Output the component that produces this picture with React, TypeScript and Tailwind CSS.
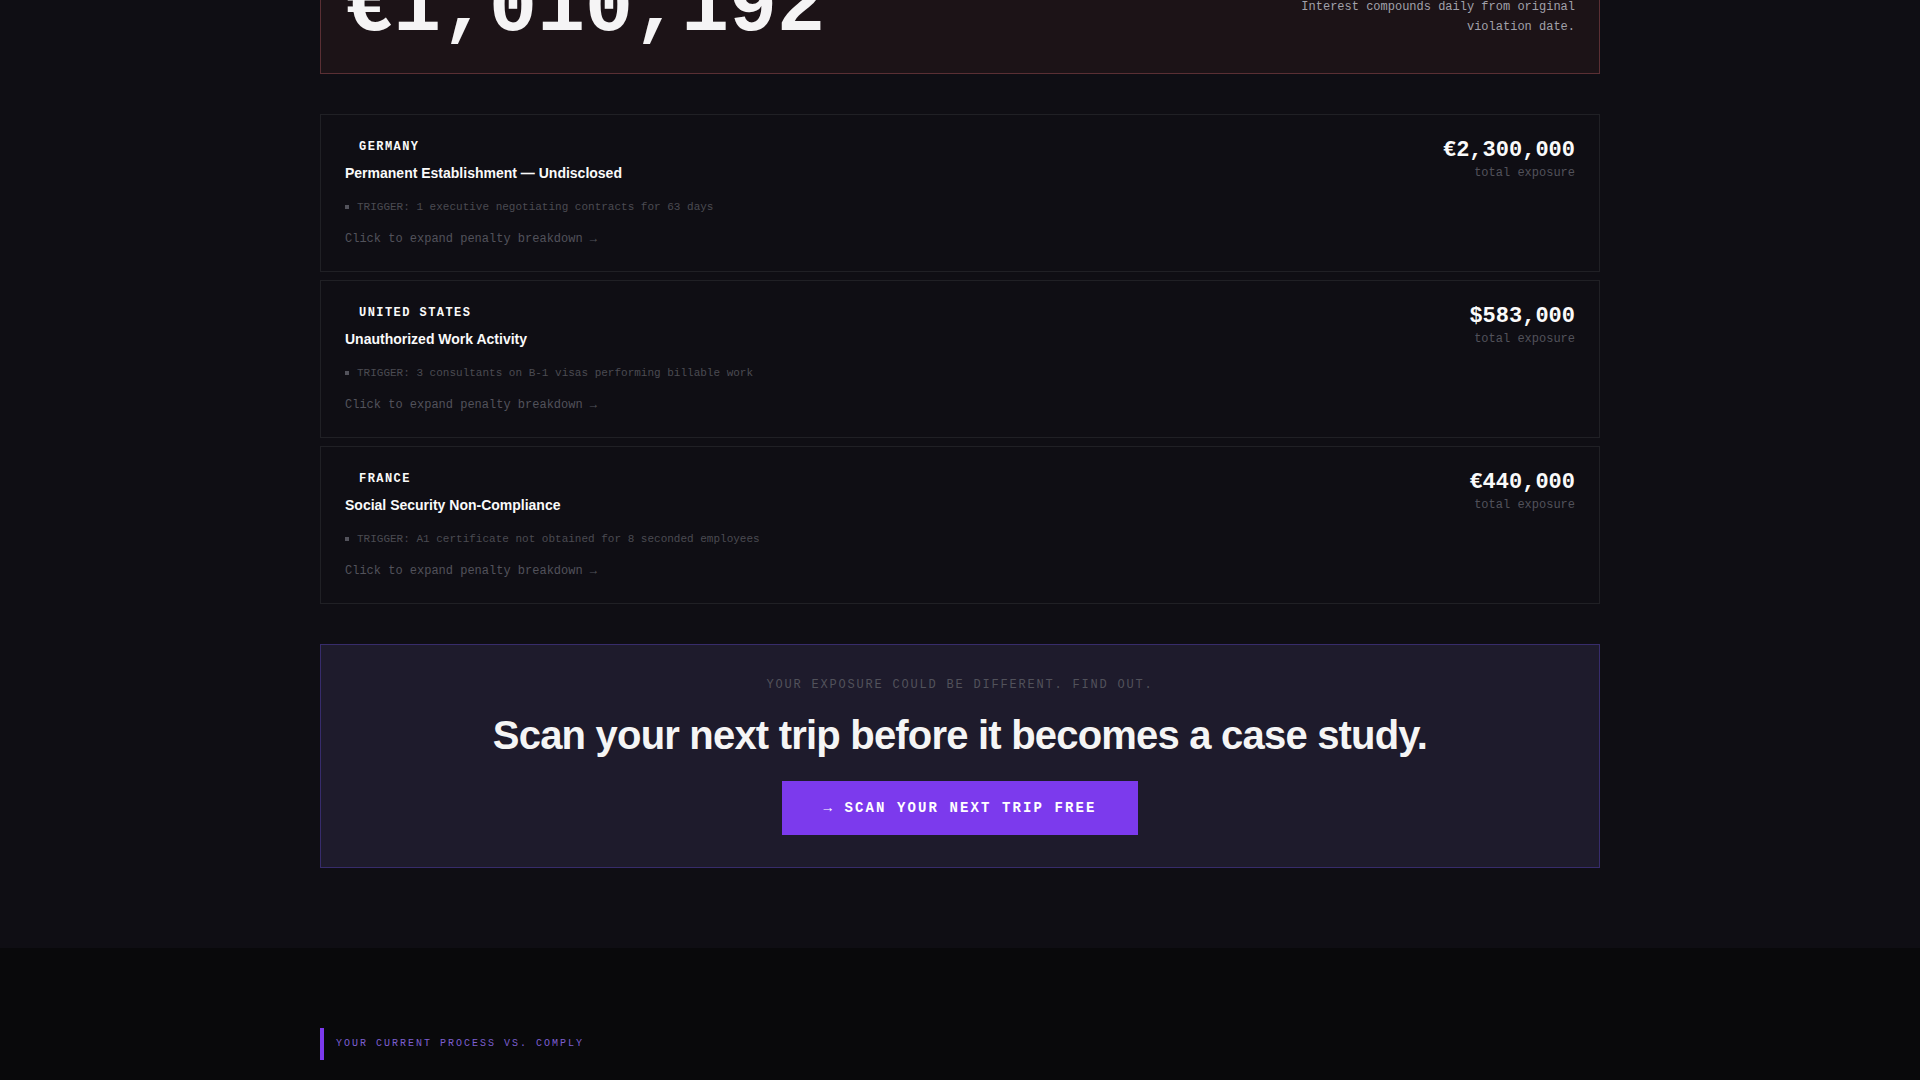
interface Violation {
  id: string;
  country: string;
  title: string;
  trigger: string;
  amount: string;
}

const violations: Violation[] = [
  {
    id: "de",
    country: "Germany",
    title: "Permanent Establishment — Undisclosed",
    trigger: "1 executive negotiating contracts for 63 days",
    amount: "€2,300,000",
  },
  {
    id: "us",
    country: "United States",
    title: "Unauthorized Work Activity",
    trigger: "3 consultants on B-1 visas performing billable work",
    amount: "$583,000",
  },
  {
    id: "fr",
    country: "France",
    title: "Social Security Non-Compliance",
    trigger: "A1 certificate not obtained for 8 seconded employees",
    amount: "€440,000",
  },
];

const mono = "font-['Liberation_Mono',monospace]";

function ExposureTotal() {
  return (
    <div className="-mt-14 flex items-end justify-between border border-[#5a2f34] bg-[#1c1317] p-6">
      <div className={`${mono} text-[80px] leading-none font-bold text-[#f5f4f5]`}>€1,010,192</div>
      <p className={`${mono} max-w-[280px] pb-3 text-right text-xs leading-5 text-[#a1a1aa]`}>
        Interest compounds daily from original violation date.
      </p>
    </div>
  );
}

function ViolationCard({ violation }: { violation: Violation }) {
  return (
    <article className="flex items-start justify-between border border-[#202025] p-6">
      <div>
        <div className={`${mono} pl-3.5 text-xs leading-4 font-bold tracking-[0.12em] text-[#fafafa] uppercase`}>
          {violation.country}
        </div>
        <h3 className="mt-2 text-sm leading-5 font-bold text-[#fafafa]">{violation.title}</h3>
        <div className={`${mono} mt-4 flex items-center gap-2 text-[11px] leading-4 text-[#4b4b52]`}>
          <span className="size-1 bg-[#52525b]" />
          <span>TRIGGER: {violation.trigger}</span>
        </div>
        <button
          type="button"
          className={`${mono} mt-4 block cursor-pointer text-xs leading-4 text-[#52525b] hover:text-[#a1a1aa]`}
        >
          Click to expand penalty breakdown →
        </button>
      </div>
      <div className={`${mono} text-right`}>
        <div className="text-[22px] leading-6 font-bold text-[#fafafa]">{violation.amount}</div>
        <div className="mt-0.5 text-xs leading-4 text-[#52525b]">total exposure</div>
      </div>
    </article>
  );
}

function ScanCta() {
  return (
    <div className="mt-10 border border-[#372c6b] bg-[#1e1b2c] p-8 text-center">
      <p className={`${mono} text-xs leading-4 tracking-[0.15em] text-[#52525b] uppercase`}>
        Your exposure could be different. Find out.
      </p>
      <h2 className="mt-5 text-[40px] leading-[44px] font-bold tracking-[-0.02em] text-[#f5f5f5]">
        Scan your next trip before it becomes a case study.
      </h2>
      <a
        href="#scan"
        className={`${mono} mx-auto mt-6 block w-fit border border-[#7c3aed] bg-[#7c3aed] px-10 py-4 text-sm leading-5 font-bold tracking-[0.15em] text-white uppercase hover:bg-[#6d28d9]`}
      >
        → Scan your next trip free
      </a>
    </div>
  );
}

export default function App() {
  return (
    <div className="flex min-h-screen flex-col overflow-hidden bg-[#09090b] font-['Liberation_Sans',sans-serif]">
      <section className="flow-root bg-[#0f0e14] pb-20">
        <div className="mx-auto max-w-7xl">
          <ExposureTotal />
          <div className="mt-10 flex flex-col gap-2">
            {violations.map((violation) => (
              <ViolationCard key={violation.id} violation={violation} />
            ))}
          </div>
          <ScanCta />
        </div>
      </section>

      <section className="flex-1 pt-20">
        <div className="mx-auto max-w-7xl">
          <div
            className={`${mono} border-l-4 border-[#7c3aed] py-2 pl-3 text-[10px] leading-4 tracking-[0.2em] text-[#7c5fd0] uppercase`}
          >
            Your current process vs. Comply
          </div>
        </div>
      </section>
    </div>
  );
}
